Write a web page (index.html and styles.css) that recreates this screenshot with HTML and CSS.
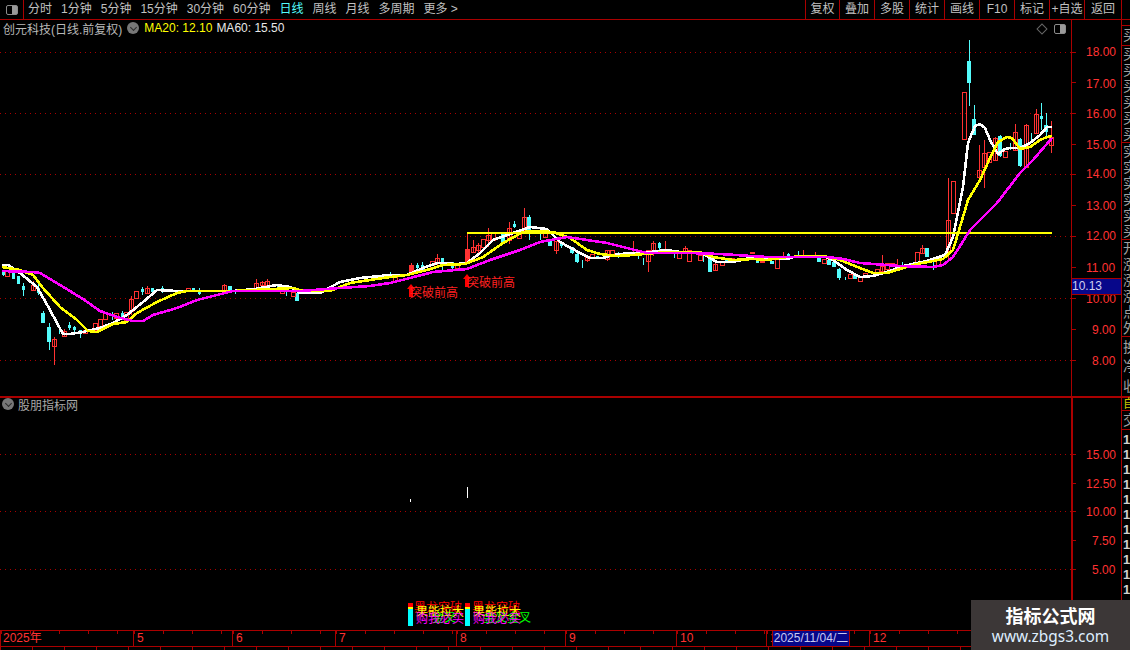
FILE: index.html
```html
<!DOCTYPE html>
<html lang="zh-CN">
<head>
<meta charset="utf-8">
<title>创元科技 日线</title>
<link rel="stylesheet" href="styles.css">
</head>
<body>
<div class="app">
  <header class="topbar">
    <div class="layout-btn"><span class="layout-icon"></span></div>
    <nav class="periods">
      <span>分时</span><span>1分钟</span><span>5分钟</span><span>15分钟</span><span>30分钟</span><span>60分钟</span>
      <span class="active">日线</span><span>周线</span><span>月线</span><span>多周期</span><span>更多 &gt;</span>
    </nav>
    <div class="tools">
      <span>复权</span><span>叠加</span><span>多股</span><span>统计</span><span>画线</span><span>F10</span><span>标记</span><span>+自选</span><span class="back">返回</span>
    </div>
  </header>

  <div class="workspace">
    <main class="charts">
      <section class="panel price">
        <svg class="plot" viewBox="0 20 1071 376" width="1071" height="376">
          <g class="grid">
            <path d="M0 52.5H1071M0 113.5H1071M0 174.5H1071M0 236.5H1071M0 298.5H1071M0 360.5H1071"/>
          </g>
          <path class="cy wick" d="M3 270V276M13 272V279M18 276V284M23 283V296M38 283V295M43 311V323M49 323V350M59 327V334M69 322V330M74 326V334M80 330V338M112 312V320M122 311V320M142 287V295M152 288V292M162 286V293M193 288V291M199 288V295M230 286V291M235 291V294M277 284V288M286 290V296M297 293V301M390 272V278M417 263V270M422 262V272M442 258V270M452 262V270M503 232V243M514 221V228M529 215V240M540 233V240M550 241V246M561 241V248M572 247V254M577 253V263M582 260V268M597 256V258M618 252V258M638 253V259M643 258V265M659 242V250M674 253V258M703 254V262M710 258V272M726 259V261M757 260V263M772 261V264M788 253V256M798 251V256M819 258V262M829 260V265M834 262V267M839 268V280M845 277V280M855 275V279M902 262V265M907 264V267M912 266V268M927 248V257M933 262V270M969 40V106M974 105V135M1000 135V157M1010 143V150M1020 138V167M1031 133V142M1041 103V130M1046 113V137"/>
          <path class="cy body3" d="M3 272V275M13 272V279M18 276V284M23 286V290M38 288V293M69 325V328M74 327V330M80 330V333M122 313V317M142 289V292M152 288V292M162 288V290M193 288V291M199 291V294M417 265V268M422 265V270M442 258V265M452 262V268M514 224V227M561 243V246M597 256V258M659 243V248M726 259V261M757 260V263M788 254V256M1041 116V119"/>
          <path class="cy body4" d="M43 313V323M49 327V342M230 286V291M297 293V301M503 232V243M529 217V230M550 241V246M572 247V253M577 254V262M710 258V272M772 261V264M819 258V262M829 260V265M834 262V267M839 269V278M855 275V279M927 248V257M969 61V83M974 119V135M1000 136V156M1020 139V166M1046 125V132"/>
          <path class="rd wick" d="M33 281V291M54 337V365M64 329V336M131 296V315M147 286V293M224 284V291M256 279V291M262 281V287M267 279V286M411 263V265M437 254V265M467 232V262M473 240V252M478 243V254M488 228V247M509 222V244M524 208V234M556 241V254M587 256V262M607 250V261M633 241V254M648 250V272M653 241V256M665 241V252M685 246V252M715 263V271M783 252V257M803 250V255M815 252V255M882 255V271M897 259V265M922 245V253M948 178V260M979 145V177M984 140V188M995 137V160M1015 124V150M1026 124V167M1036 109V133M1051 121V153"/>
          <path class="rd hollow" d="M5 270h4v6h-4zM31 285h4v5h-4zM52 339h4v7h-4zM62 331h4v5h-4zM83 330h4v3h-4zM93 323h4v7h-4zM98 319h4v7h-4zM103 312h4v7h-4zM114 313h4v5h-4zM124 312h4v8h-4zM129 299h4v12h-4zM134 291h4v7h-4zM145 288h4v5h-4zM186 288h4v3h-4zM222 285h4v6h-4zM254 283h4v6h-4zM260 282h4v3h-4zM265 281h4v4h-4zM280 290h4v3h-4zM291 292h4v4h-4zM393 277h4v4h-4zM430 261h4v7h-4zM435 258h4v5h-4zM455 263h4v5h-4zM471 247h4v5h-4zM476 245h4v5h-4zM481 239h4v8h-4zM486 235h4v5h-4zM491 233h4v7h-4zM507 228h4v12h-4zM517 232h4v6h-4zM522 217h4v15h-4zM543 232h4v5h-4zM554 241h4v9h-4zM585 257h4v3h-4zM590 254h4v4h-4zM605 250h4v9h-4zM610 250h4v4h-4zM646 250h4v11h-4zM651 243h4v9h-4zM677 252h4v6h-4zM683 248h4v4h-4zM687 250h4v11h-4zM698 255h4v5h-4zM713 264h4v6h-4zM720 261h4v4h-4zM730 258h4v4h-4zM775 256h4v12h-4zM822 259h4v4h-4zM848 274h4v4h-4zM858 277h4v4h-4zM863 273h4v3h-4zM875 269h4v4h-4zM880 266h4v5h-4zM885 263h4v6h-4zM890 263h4v3h-4zM915 252h4v10h-4zM920 248h4v5h-4zM936 260h4v5h-4zM946 220h4v32h-4zM951 181h4v32h-4zM962 92h4v47h-4zM977 170h4v7h-4zM982 153h4v14h-4zM987 152h4v10h-4zM993 138h4v22h-4zM1003 151h4v6h-4zM1013 132h4v18h-4zM1024 125h4v42h-4zM1034 114h4v19h-4zM1049 137h4v8h-4z"/>
          <path class="fill" d="M409 265h5v8h-5zM465 249h5v13h-5zM750 252h5v2h-5zM760 261h5v2h-5z"/>
          <polyline class="ma white" points="2,265 8,265 20,273 37,287 50,310 63,334 70,334 83,332 100,328 113,323 127,315 143,302 157,290 177,291 233,291 255,289 277,285 290,287 300,293 320,293 340,282 360,278 390,275 407,275 423,268 437,263 457,264 467,263 480,253 493,240 513,233 530,227 547,229 560,242 580,253 590,258 603,258 613,255 630,253 643,253 667,250 687,253 700,252 710,258 717,262 733,262 750,258 767,259 787,259 797,256 823,256 833,260 847,270 860,277 873,276 890,271 903,266 927,261 945,255 953,237 963,187 968,143 975,126 980,124 985,128 990,140 998,154 1005,149 1010,148 1020,148 1030,143 1040,135 1047,127 1052,127"/>
          <polyline class="ma yellow" points="2,267 20,270 33,275 43,288 60,307 77,320 88,331 97,332 113,324 127,322 137,313 157,302 177,293 187,291 233,291 293,288 300,290 330,291 350,283 390,277 407,275 427,270 443,265 465,264 483,257 503,243 523,232 533,231 553,232 570,238 587,250 600,254 617,256 633,255 667,252 690,252 700,252 713,257 733,260 753,259 767,260 787,257 823,256 840,260 860,268 873,273 887,273 900,269 917,264 933,261 943,259 953,250 960,227 968,200 980,180 990,158 998,142 1007,137 1012,138 1020,149 1030,147 1040,140 1047,137 1052,136"/>
          <path class="level" d="M467 232.5H1052"/>
          <polyline class="ma magenta" points="2,271 33,272 40,273 60,285 83,299 100,311 117,317 133,321 143,321 153,315 177,308 197,300 213,296 233,291 300,291 340,288 370,286 390,283 410,278 433,272 467,269 490,260 520,250 540,242 567,237 587,240 607,243 623,247 647,253 690,253 720,254 767,257 813,257 827,257 843,259 860,263 900,266 933,267 943,265 953,257 962,243 970,230 997,203 1020,173 1033,160 1052,138"/>
          <path class="arrow" d="M411 284l4 5h-2v8h-4v-8h-2zM467 274l4 5h-2v8h-4v-8h-2z"/>
          <text class="signal" x="410" y="297">突破前高</text>
          <text class="signal" x="467" y="287">突破前高</text>
        </svg>
        <svg class="axis" viewBox="1072 20 49 376" width="50" height="376">
          <path class="tick" d="M1071 52.500h5M1071 82.500h5M1071 113.500h5M1071 144.500h5M1071 174.500h5M1071 205.500h5M1071 236.500h5M1071 267.500h5M1071 298.500h5M1071 329.500h5M1071 360.500h5"/>
          <text class="axis-text" x="1086" y="56">18.00</text>
          <text class="axis-text" x="1086" y="88">17.00</text>
          <text class="axis-text" x="1086" y="118">16.00</text>
          <text class="axis-text" x="1086" y="149">15.00</text>
          <text class="axis-text" x="1086" y="178">14.00</text>
          <text class="axis-text" x="1086" y="210">13.00</text>
          <text class="axis-text" x="1086" y="240">12.00</text>
          <text class="axis-text" x="1086" y="272">11.00</text>
          <text class="axis-text" x="1086" y="303">10.00</text>
          <text class="axis-text" x="1092" y="334">9.00</text>
          <text class="axis-text" x="1092" y="365">8.00</text>
        </svg>
        <div class="title-row">
          <span>创元科技(日线.前复权)</span>
          <span class="round-btn"></span>
          <span class="ma20">MA20: 12.10</span>
          <span class="ma60">MA60: 15.50</span>
        </div>
        <div class="plot-tools">
          <span class="diamond"></span>
          <span class="layout-icon"></span>
        </div>
        <div class="price-tag">10.13</div>
      </section>

      <section class="panel indicator">
        <svg class="plot" viewBox="0 398 1071 232" width="1071" height="232">
          <path class="grid-line" d="M0 454.500H1071M0 511.500H1071M0 569.500H1071"/>
          <path class="tall" d="M410.500 499V502M467.500 487V498"/>
          <path class="bar-red" d="M408 603h5v4h-5zM465 603h5v4h-5z"/>
          <path class="bar-yellow" d="M408 607h5v2h-5zM465 607h5v2h-5z"/>
          <path class="bar-cyan" d="M408 609h5v17h-5zM465 609h5v17h-5z"/>
          <text class="stack s-red" x="414" y="612">黑龙突破</text>
          <text class="stack s-red" x="472" y="612">黑龙突破</text>
          <text class="stack s-green" x="432" y="622">金叉</text>
          <text class="stack s-green" x="483" y="622">金叉金叉</text>
          <text class="stack s-yellow" x="416" y="616">果能拉大</text>
          <text class="stack s-yellow" x="473" y="616">果能拉大</text>
          <text class="stack s-magenta" x="416" y="623">购我必买</text>
          <text class="stack s-magenta" x="473" y="623">购我必买</text>
        </svg>
        <svg class="axis" viewBox="1073 398 48 232" width="50" height="232">
          <path class="tick" d="M1071 454.500h5M1071 483.500h5M1071 511.500h5M1071 540.500h5M1071 569.500h5"/>
          <text class="axis-text" x="1086" y="459">15.00</text>
          <text class="axis-text" x="1086" y="488">12.50</text>
          <text class="axis-text" x="1086" y="516">10.00</text>
          <text class="axis-text" x="1092" y="545">7.50</text>
          <text class="axis-text" x="1092" y="574">5.00</text>
        </svg>
        <div class="title-row sub">
          <span class="round-btn"></span>
          <span>股朋指标网</span>
        </div>
      </section>

      <div class="timeaxis">
        <span>2025年</span><span>5</span><span>6</span><span>7</span><span>8</span><span>9</span><span>10</span><span>1</span><span>12</span>
        <div class="date-tag">2025/11/04/二</div>
      </div>
      <div class="timeticks"></div>
    </main>

    <aside class="side">
      <div class="side-top"></div>
      <div class="side-cell small">买</div>
      <div class="side-group"><i>买</i><i>买</i><i>买</i><i>买</i><i>买</i><i>买</i></div>
      <div class="side-group"><i>实</i><i>实</i><i>实</i><i>实</i><i>实</i><i>买</i></div>
      <div class="side-group"><i>开</i><i>涨</i><i>涨</i><i>涨</i><i>点</i><i>外</i></div>
      <div class="side-group short"><i>换</i><i>净</i><i>收</i></div>
      <div class="side-cell self">自</div>
      <div class="side-cell">交</div>
      <div class="side-nums"><b>1</b><b>1</b><b>1</b><b>1</b><b>1</b><b>1</b><b>1</b><b>1</b><b>1</b><b>1</b><b>1</b><b>1</b></div>
    </aside>
  </div>

  <div class="watermark">
    <strong>指标公式网</strong>
    <span>www.zbgs3.com</span>
  </div>
</div>
</body>
</html>
```

FILE: styles.css
```css
* { box-sizing: border-box; margin: 0; padding: 0; }

html, body { background: #000; }

body {
  width: 1130px;
  height: 650px;
  overflow: hidden;
  font-family: "Liberation Sans", "Noto Sans CJK SC", sans-serif;
  font-size: 12px;
  color: #c0c0c0;
}

.app {
  position: relative;
  display: flex;
  flex-direction: column;
  width: 1130px;
  height: 650px;
  overflow: hidden;
  background: #000;
}

/* top bar */
.topbar {
  display: flex;
  align-items: stretch;
  height: 20px;
  flex: none;
  border-bottom: 1px solid #aa0000;
  line-height: 19px;
}

.layout-btn {
  display: flex;
  align-items: center;
  justify-content: center;
  width: 24px;
  border-right: 1px solid #aa0000;
}

.layout-icon {
  display: block;
  width: 12px;
  height: 10px;
  border: 1px solid #8c8c8c;
  border-radius: 2px;
  background: linear-gradient(to right, transparent 50%, #9a9a9a 50%);
}

.periods {
  display: flex;
  gap: 9px;
  padding-left: 4px;
}

.periods .active { color: #54fcfc; }

.tools {
  display: flex;
  margin-left: auto;
  margin-right: 8px;
}

.tools span {
  width: 35px;
  text-align: center;
  border-left: 1px solid #aa0000;
}

.tools span:first-child { width: 34px; }

.tools .back {
  width: 38px;
  border-right: 1px solid #aa0000;
}

/* chart workspace */
.workspace {
  display: flex;
  flex: 1;
  min-height: 0;
}

.charts {
  display: flex;
  flex-direction: column;
  width: 1122px;
  flex: none;
  border-right: 1px solid #aa0000;
}

.panel {
  position: relative;
  display: flex;
  flex: none;
}

.price {
  height: 378px;
  border-bottom: 2px solid #aa0000;
}

.indicator { height: 232px; }

.plot { display: block; flex: none; }

.axis {
  display: block;
  flex: none;
  border-left: 1px solid #aa0000;
  overflow: hidden;
}

.indicator .axis { border-left-width: 2px; }

.grid path,
.grid-line {
  fill: none;
  stroke: #aa0000;
  stroke-width: 1;
  stroke-dasharray: 1 4;
  shape-rendering: crispEdges;
}

.tick {
  fill: none;
  stroke: #aa0000;
  shape-rendering: crispEdges;
}

.axis-text {
  fill: #ff3232;
  font-size: 12px;
}

.wick, .body3, .body4, .hollow, .ma, .level, .tall {
  fill: none;
  shape-rendering: crispEdges;
}

.cy { stroke: #54fcfc; }
.rd { stroke: #ff3232; }
.wick { stroke-width: 1; }
.body3 { stroke-width: 3; }
.body4 { stroke-width: 4; }
.hollow { stroke-width: 1; }
.fill { fill: #ff3232; shape-rendering: crispEdges; }

.ma {
  stroke-width: 2.600;
  stroke-linejoin: round;
}

.white { stroke: #ffffff; }
.yellow { stroke: #ffff00; }
.magenta { stroke: #ff00ff; }

.level {
  stroke: #ffff00;
  stroke-width: 2;
}

.arrow { fill: #ff0000; }

.signal {
  fill: #ff2020;
  font-size: 12px;
}

.tall { stroke: #ffffff; stroke-width: 1; }
.bar-red { fill: #ff0000; }
.bar-yellow { fill: #ffff00; }
.bar-cyan { fill: #00ffff; }

.stack { font-size: 12px; }
.s-red { fill: #ff0000; }
.s-yellow { fill: #ffff00; }
.s-magenta { fill: #ff00ff; }
.s-green { fill: #00ff00; }

/* overlays on the plots */
.title-row {
  position: absolute;
  left: 3px;
  top: 1px;
  display: flex;
  align-items: center;
  height: 14px;
  color: #b8b8b8;
}

.title-row.sub { left: 2px; top: -1px; color: #a8a8a8; }
.title-row.sub .round-btn { margin: 0 4px 0 0; }

.round-btn {
  position: relative;
  width: 12px;
  height: 12px;
  margin: 0 4px 0 5px;
  border-radius: 50%;
  background: #777;
}

.round-btn::after {
  content: "";
  position: absolute;
  left: 3.500px;
  top: 2.500px;
  width: 4px;
  height: 4px;
  border-right: 1.500px solid #2c2c2c;
  border-bottom: 1.500px solid #2c2c2c;
  transform: rotate(45deg);
}

.ma20 { color: #ffff00; margin-left: 1px; }
.ma60 { margin-left: 4px; color: #e8e8e8; }

.plot-tools {
  position: absolute;
  top: 4px;
  left: 1038px;
  display: flex;
  align-items: center;
  gap: 8px;
}

.diamond {
  width: 8px;
  height: 8px;
  border: 1px solid #666;
  transform: rotate(45deg);
}

.price-tag {
  position: absolute;
  left: 1071px;
  top: 258px;
  width: 51px;
  height: 17px;
  border: 1px solid #aa0000;
  background: #07078a;
  color: #d0d0f0;
  line-height: 15px;
}

/* time axis */
.timeaxis {
  position: relative;
  display: grid;
  grid-template-columns: 133px 99px 103px 121px 109px 111px 90px 103px 1fr;
  height: 17px;
  flex: none;
  border-top: 1px solid #aa0000;
  border-bottom: 1px solid #aa0000;
  color: #ff3232;
  line-height: 15px;
}

.timeaxis span {
  padding-left: 3px;
  border-left: 1px solid #aa0000;
  background: repeating-linear-gradient(to right, #aa0000 0 1px, transparent 1px 29px) left top / 100% 3px no-repeat;
}

.timeaxis span:first-child { padding-left: 2px; }

.date-tag {
  position: absolute;
  left: 772px;
  top: 0;
  width: 78px;
  height: 15px;
  background: #07078a;
  border: 1px solid #aa0000;
  border-width: 0 1px;
  color: #c8c8f0;
  line-height: 15px;
  text-align: center;
}

.timeticks {
  flex: 1;
  background: repeating-linear-gradient(to right, #aa0000 0 1px, transparent 1px 32px);
}

/* clipped right-hand column */
.side {
  display: flex;
  flex-direction: column;
  width: 8px;
  flex: none;
  overflow: hidden;
  padding-left: 1px;
  font-size: 14px;
  color: #a0a0a0;
  white-space: nowrap;
}

.side-top {
  height: 6px;
  flex: none;
  margin-left: -1px;
  border-bottom: 1px solid #aa0000;
}

.side-cell {
  height: 19px;
  flex: none;
  margin-left: -1px;
  padding-left: 1px;
  line-height: 18px;
  border-bottom: 1px solid #aa0000;
}

.side-cell.small { height: 20px; }
.side-cell.self {
  height: 13px;
  color: #c8c800;
  line-height: 12px;
  font-size: 12px;
}

.side-group {
  display: flex;
  flex-direction: column;
  justify-content: space-around;
  height: 97px;
  flex: none;
  margin-left: -1px;
  padding-left: 1px;
  border-bottom: 1px solid #aa0000;
  line-height: 16px;
}

.side-group.short { height: 61px; border-bottom: 2px solid #aa0000; }
.side-group i { font-style: normal; }

.side-nums {
  display: flex;
  flex-direction: column;
  padding-top: 2px;
  color: #d0d0d0;
  font-size: 13px;
  line-height: 15px;
}

/* watermark */
.watermark {
  position: absolute;
  right: 0;
  bottom: 0;
  display: flex;
  flex-direction: column;
  align-items: center;
  width: 159px;
  height: 50px;
  padding-top: 4px;
  background: #3c3737;
  color: #fff;
}

.watermark strong {
  font-size: 18px;
  line-height: 23px;
  font-family: "Noto Sans CJK SC", sans-serif;
}

.watermark span {
  font-size: 15.400px;
  line-height: 19px;
  color: #dfeeff;
  font-family: "Noto Sans", sans-serif;
}
```
